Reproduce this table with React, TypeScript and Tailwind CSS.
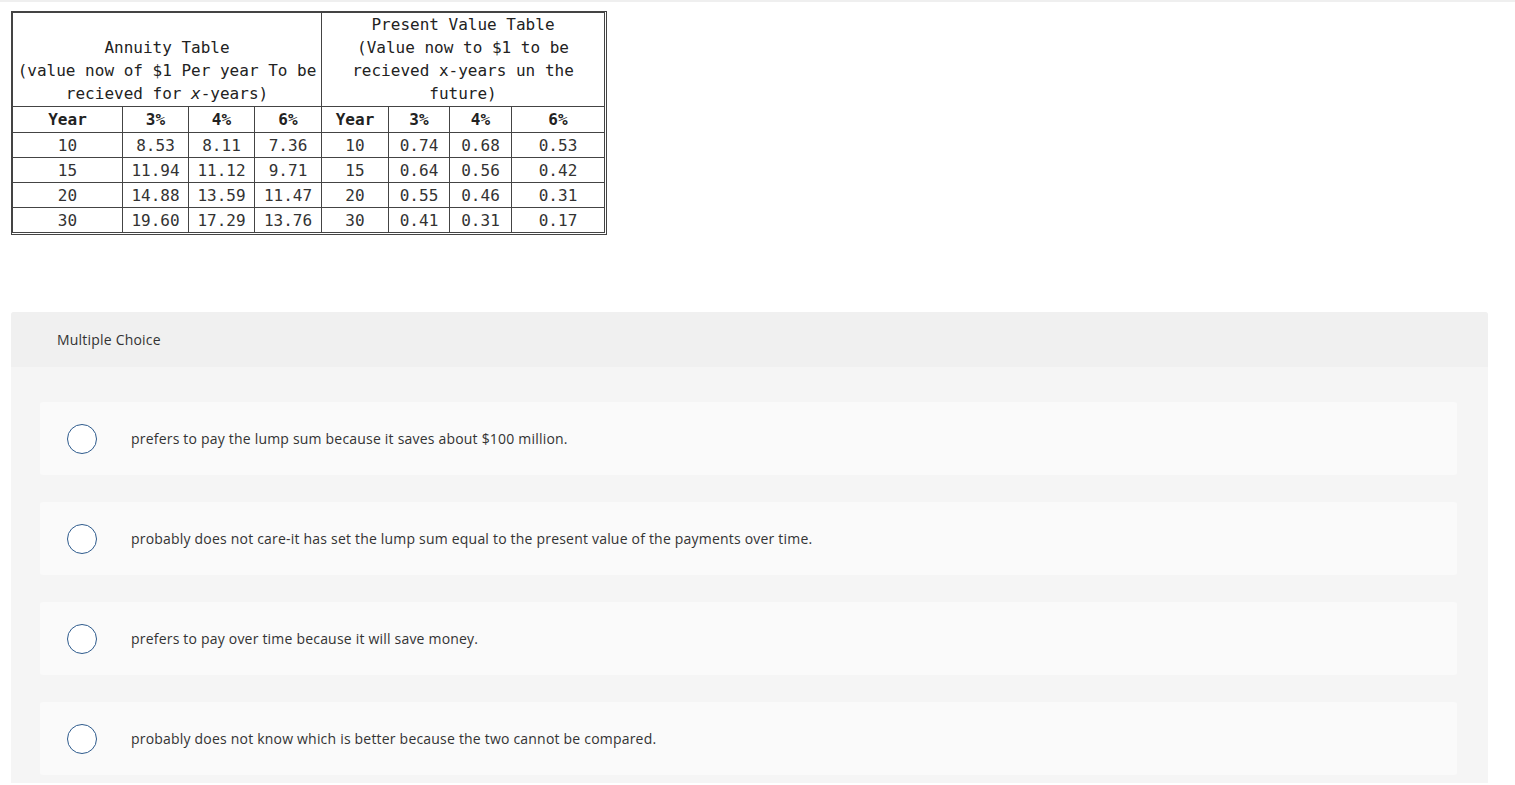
import React from "react";

const annuity = [
  ["10", "8.53", "8.11", "7.36"],
  ["15", "11.94", "11.12", "9.71"],
  ["20", "14.88", "13.59", "11.47"],
  ["30", "19.60", "17.29", "13.76"],
];

const present = [
  ["10", "0.74", "0.68", "0.53"],
  ["15", "0.64", "0.56", "0.42"],
  ["20", "0.55", "0.46", "0.31"],
  ["30", "0.41", "0.31", "0.17"],
];

const choices = [
  "prefers to pay the lump sum because it saves about $100 million.",
  "probably does not care-it has set the lump sum equal to the present value of the payments over time.",
  "prefers to pay over time because it will save money.",
  "probably does not know which is better because the two cannot be compared.",
];

const cell = "border border-[#444] text-center px-1";

const App = () => {
  return (
    <div className="min-h-screen bg-white" style={{ fontFamily: "'Open Sans', Lato, sans-serif" }}>
      <div className="h-[2px] bg-[#efefef]" />
      <div className="pl-[11px] pt-[9px]">
        <div className="inline-block border border-[#444] pr-[1px] pb-[1px]">
          <table
            className="table-fixed border-collapse text-[16px] leading-[23px] text-[#222]"
            style={{ fontFamily: "'DejaVu Sans Mono', 'Liberation Mono', monospace" }}
          >
            <colgroup>
              <col className="w-[110px]" />
              <col className="w-[66px]" />
              <col className="w-[66px]" />
              <col className="w-[67px]" />
              <col className="w-[67px]" />
              <col className="w-[61px]" />
              <col className="w-[62px]" />
              <col className="w-[93px]" />
            </colgroup>
            <thead>
              <tr className="h-[94px]">
                <th colSpan={4} className={`${cell} align-bottom font-normal pb-[1px]`}>
                  Annuity Table
                  <br />
                  (value now of $1 Per year To be
                  <br />
                  recieved for <i>x</i>-years)
                </th>
                <th colSpan={4} className={`${cell} align-bottom font-normal pb-[1px]`}>
                  Present Value Table
                  <br />
                  (Value now to $1 to be
                  <br />
                  recieved x-years un the
                  <br />
                  future)
                </th>
              </tr>
              <tr className="h-[26px]">
                {["Year", "3%", "4%", "6%", "Year", "3%", "4%", "6%"].map((h, i) => (
                  <th key={i} className={`${cell} font-bold`}>
                    {h}
                  </th>
                ))}
              </tr>
            </thead>
            <tbody className="text-[#333]">
              {annuity.map((row, r) => (
                <tr key={r} className="h-[25px]">
                  {row.concat(present[r]).map((v, i) => (
                    <td key={i} className={cell}>
                      {v}
                    </td>
                  ))}
                </tr>
              ))}
            </tbody>
          </table>
        </div>
      </div>

      <div className="ml-[11px] mt-[71px] w-[1477px] rounded-t-[3px] bg-[#f5f5f5] tracking-[0.2px]">
        <div className="flex h-[55px] items-center rounded-t-[3px] bg-[#f0f0f0] pl-[46px] text-[14px] text-[#333]">
          Multiple Choice
        </div>
        <div className="flex flex-col gap-[27px] pl-[29px] pr-[31px] pt-[35px] pb-[8px]">
          {choices.map((c, i) => (
            <div key={i} className="flex h-[73px] items-center rounded-[3px] bg-[#fafafa]">
              <div className="ml-[27px] h-[30px] w-[30px] shrink-0 rounded-full border-[1.5px] border-[#2d5a8c] bg-white" />
              <span className="ml-[34px] text-[14px] text-[#333]">{c}</span>
            </div>
          ))}
        </div>
      </div>
    </div>
  );
};

export default App;
